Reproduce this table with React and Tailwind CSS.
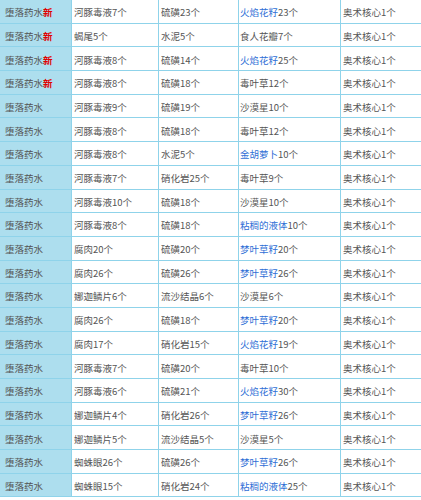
const rows = [
  ["堕落药水", true, "河豚毒液7个", "硫磺23个", ["火焰花籽", "23个"]],
  ["堕落药水", true, "蝎尾5个", "水泥5个", [null, "食人花瓣7个"]],
  ["堕落药水", true, "河豚毒液8个", "硫磺14个", ["火焰花籽", "25个"]],
  ["堕落药水", true, "河豚毒液8个", "硫磺18个", [null, "毒叶草12个"]],
  ["堕落药水", false, "河豚毒液9个", "硫磺19个", [null, "沙漠星10个"]],
  ["堕落药水", false, "河豚毒液8个", "硫磺18个", [null, "毒叶草12个"]],
  ["堕落药水", false, "河豚毒液8个", "水泥5个", ["金胡萝卜", "10个"]],
  ["堕落药水", false, "河豚毒液7个", "硝化岩25个", [null, "毒叶草9个"]],
  ["堕落药水", false, "河豚毒液10个", "硫磺18个", [null, "沙漠星10个"]],
  ["堕落药水", false, "河豚毒液8个", "硫磺18个", ["粘稠的液体", "10个"]],
  ["堕落药水", false, "腐肉20个", "硫磺20个", ["梦叶草籽", "20个"]],
  ["堕落药水", false, "腐肉26个", "硫磺26个", ["梦叶草籽", "26个"]],
  ["堕落药水", false, "娜迦鳞片6个", "流沙结晶6个", [null, "沙漠星6个"]],
  ["堕落药水", false, "腐肉26个", "硫磺18个", ["梦叶草籽", "20个"]],
  ["堕落药水", false, "腐肉17个", "硝化岩15个", ["火焰花籽", "19个"]],
  ["堕落药水", false, "河豚毒液7个", "硫磺20个", [null, "毒叶草10个"]],
  ["堕落药水", false, "河豚毒液6个", "硫磺21个", ["火焰花籽", "30个"]],
  ["堕落药水", false, "娜迦鳞片4个", "硝化岩26个", ["梦叶草籽", "26个"]],
  ["堕落药水", false, "娜迦鳞片5个", "流沙结晶5个", [null, "沙漠星5个"]],
  ["堕落药水", false, "蜘蛛眼26个", "硫磺26个", ["梦叶草籽", "26个"]],
  ["堕落药水", false, "蜘蛛眼15个", "硝化岩24个", ["粘稠的液体", "25个"]],
];

export default function App() {
  return (
    <div
      className="w-[421px] h-[500px] bg-white overflow-hidden text-[9.5px] text-[#555]"
      style={{ fontFamily: '"Noto Sans CJK SC", "Noto Sans", sans-serif' }}
    >
      {rows.map((r, i) => (
        <div
          key={i}
          className="grid grid-cols-[72px_87px_80px_102px_1fr] h-[23.7px] border-b border-[#8fd3ea]"
        >
          <div className="bg-[#addeee] border-r border-[#8fd3ea] flex items-center pl-[5px] pt-[2px]">
            {r[0]}
            {r[1] && <span className="text-[#e00000] font-bold">新</span>}
          </div>
          <div className="border-r border-[#8fd3ea] flex items-center pl-[2px] pt-[2px]">{r[2]}</div>
          <div className="border-r border-[#8fd3ea] flex items-center pl-[2px] pt-[2px]">{r[3]}</div>
          <div className="border-r border-[#8fd3ea] flex items-center pl-[1px] pt-[2px]">
            {r[4][0] && <span className="text-[#2f6fd6]">{r[4][0]}</span>}
            {r[4][1]}
          </div>
          <div className="flex items-center pl-[2px] pt-[2px]">奥术核心1个</div>
        </div>
      ))}
    </div>
  );
}
